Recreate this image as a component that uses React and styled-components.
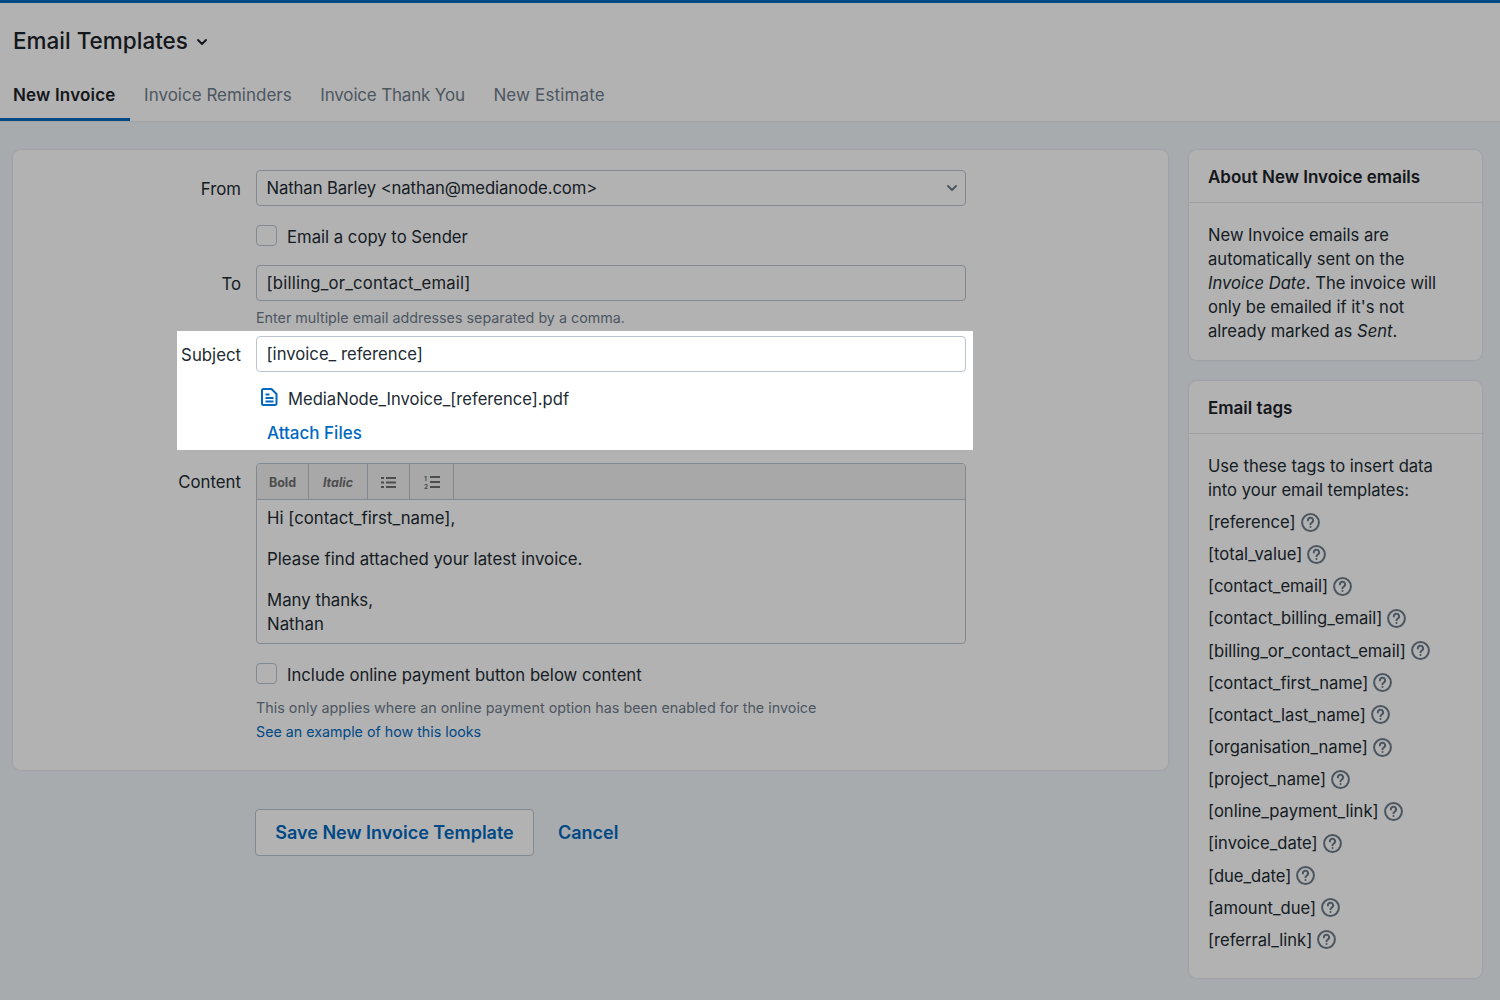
import React from 'react';
import styled, { createGlobalStyle } from 'styled-components';

const GlobalReset = createGlobalStyle`
  html, body {
    margin: 0;
    height: 100%;
    overflow: hidden;
    background: #f1f5fa;
  }
  body {
    font-family: Inter, "Liberation Sans", sans-serif;
    color: #222b33;
  }
  * { box-sizing: border-box; }
`;

const TAGS = [
  'reference', 'total_value', 'contact_email', 'contact_billing_email',
  'billing_or_contact_email', 'contact_first_name', 'contact_last_name',
  'organisation_name', 'project_name', 'online_payment_link', 'invoice_date',
  'due_date', 'amount_due', 'referral_link',
];

const Chevron = ({ size = 12, width = 2 }) => (
  <svg width={size} height={size} viewBox="0 0 12 12" fill="none" stroke="currentColor" strokeWidth={width} strokeLinecap="round" strokeLinejoin="round">
    <path d="M2 4l4 4 4-4" />
  </svg>
);

const HelpIcon = () => (
  <svg width="19" height="19" viewBox="0 0 19 19" fill="none" stroke="#6c7b8a" strokeWidth="2" strokeLinecap="round">
    <circle cx="9.5" cy="9.5" r="8.4" />
    <path d="M6.9 7.4a2.6 2.6 0 1 1 3.9 2.2c-.9.5-1.3 1-1.3 1.7" />
    <path d="M9.5 14v.1" />
  </svg>
);

const FileIcon = () => (
  <svg width="17" height="18" viewBox="0 0 17 18" fill="none" stroke="#0069bf" strokeWidth="2" strokeLinejoin="round">
    <path d="M2.5 1h8l5 5v9.5a1.5 1.5 0 0 1-1.5 1.5H2.5A1.5 1.5 0 0 1 1 15.5v-13A1.5 1.5 0 0 1 2.5 1z" />
    <path d="M4.5 6.5h4M4.5 10h8M4.5 13.5h8" />
  </svg>
);

const BulletIcon = () => (
  <svg width="15" height="13" viewBox="0 0 15 13" fill="#6f6f6f">
    <rect x="0" y="1" width="3" height="2" />
    <rect x="0" y="5.5" width="3" height="2" />
    <rect x="0" y="10" width="3" height="2" />
    <rect x="5" y="1" width="10" height="2" />
    <rect x="5" y="5.5" width="10" height="2" />
    <rect x="5" y="10" width="10" height="2" />
  </svg>
);

const NumberIcon = () => (
  <svg width="16" height="14" viewBox="0 0 16 14" fill="#6f6f6f">
    <text x="0" y="6" fontSize="6.5" fontWeight="700" fontFamily="Inter, sans-serif">1</text>
    <text x="0" y="13.5" fontSize="6.5" fontWeight="700" fontFamily="Inter, sans-serif">2</text>
    <rect x="6" y="1" width="10" height="2" />
    <rect x="6" y="6" width="10" height="2" />
    <rect x="6" y="11" width="10" height="2" />
  </svg>
);

const App = () => (
  <>
    <GlobalReset />
    <Page>
      <Header>
        <Title>
          Email Templates
          <TitleCaret><Chevron /></TitleCaret>
        </Title>
        <Tabs>
          <Tab $active $spacing={0.18}>New Invoice</Tab>
          <Tab>Invoice Reminders</Tab>
          <Tab $spacing={-0.18}>Invoice Thank You</Tab>
          <Tab $spacing={0.15}>New Estimate</Tab>
        </Tabs>
      </Header>

      <Columns>
        <MainColumn>
          <FormCard>
            <FormRow>
              <Label>From</Label>
              <Select>
                Nathan Barley &lt;nathan@medianode.com&gt;
                <SelectCaret><Chevron /></SelectCaret>
              </Select>
            </FormRow>
            <CheckRow>
              <Checkbox />
              <CheckLabel>Email a copy to Sender</CheckLabel>
            </CheckRow>
            <FormRow $top={17}>
              <Label>To</Label>
              <Field $spacing={0.2}>[billing_or_contact_email]</Field>
            </FormRow>
            <Hint>Enter multiple email addresses separated by a comma.</Hint>

            <SubjectGroup>
              <Spotlight />
              <FormRow>
                <Label>Subject</Label>
                <Field>[invoice_ reference]</Field>
              </FormRow>
              <AttachmentRow>
                <FileIcon />
                <span>MediaNode_Invoice_[reference].pdf</span>
              </AttachmentRow>
              <AttachLink>Attach Files</AttachLink>
            </SubjectGroup>

            <ContentRow>
              <Label>Content</Label>
              <Editor>
                <Toolbar>
                  <ToolButton $w={52}>Bold</ToolButton>
                  <ToolButton $w={59} $italic>Italic</ToolButton>
                  <ToolButton $w={42}><BulletIcon /></ToolButton>
                  <ToolButton $w={44}><NumberIcon /></ToolButton>
                </Toolbar>
                <EditorBody>
                  <p>Hi [contact_first_name],</p>
                  <p>Please find attached your latest invoice.</p>
                  <p>Many thanks,<br />Nathan</p>
                </EditorBody>
              </Editor>
            </ContentRow>

            <CheckRow $top={18.5}>
              <Checkbox />
              <CheckLabel>Include online payment button below content</CheckLabel>
            </CheckRow>
            <SmallNote>This only applies where an online payment option has been enabled for the invoice</SmallNote>
            <SmallLink>See an example of how this looks</SmallLink>
          </FormCard>

          <Actions>
            <SaveButton>Save New Invoice Template</SaveButton>
            <CancelLink>Cancel</CancelLink>
          </Actions>
        </MainColumn>

        <Sidebar>
          <SideCard>
            <SideTitle>About New Invoice emails</SideTitle>
            <SideBody>
              New Invoice emails are automatically sent on the <em>Invoice Date</em>. The invoice will only be emailed if it's not already marked as <em>Sent</em>.
            </SideBody>
          </SideCard>
          <SideCard>
            <SideTitle>Email tags</SideTitle>
            <SideBody $bottom={22}>
              Use these tags to insert data into your email templates:
              <TagList>
                {TAGS.map((tag) => (
                  <TagRow key={tag}>[{tag}] <HelpIcon /></TagRow>
                ))}
              </TagList>
            </SideBody>
          </SideCard>
        </Sidebar>
      </Columns>
    </Page>
  </>
);

export default App;

const Page = styled.div`
  height: 1000px;
  border-top: 3px solid #0069bf;
`;

const Header = styled.header`
  height: 119px;
  background: #fff;
  border-bottom: 1px solid #e6e9ee;
`;

const Title = styled.h1`
  display: flex;
  align-items: center;
  height: 75px;
  margin: 0;
  padding-left: 13px;
  font-size: 22.5px;
  font-weight: 500;
  color: #1c2329;
`;

const TitleCaret = styled.span`
  display: flex;
  margin-left: 8px;
  margin-top: 2px;
`;

const Tabs = styled.nav`
  display: flex;
  height: 43px;
`;

const Tab = styled.div`
  display: flex;
  align-items: center;
  padding: 0 14.3px 6px;
  font-size: 17px;
  letter-spacing: ${({ $spacing }) => $spacing || 0}px;
  font-weight: ${({ $active }) => ($active ? 600 : 400)};
  color: ${({ $active }) => ($active ? '#1c2329' : '#6f7d8c')};
  border-bottom: 3px solid ${({ $active }) => ($active ? '#0069bf' : 'transparent')};
  &:first-child {
    padding-left: 13px;
  }
`;

const Columns = styled.div`
  display: flex;
  gap: 21px;
  padding: 28px 18px 0 13px;
`;

const MainColumn = styled.main`
  width: 1155px;
`;

const FormCard = styled.section`
  height: 620px;
  padding-top: 20px;
  background: #fff;
  border-radius: 8px;
  box-shadow: 0 0 3px rgba(60, 70, 90, 0.18);
`;

const FormRow = styled.div`
  display: grid;
  grid-template-columns: 228px 710px;
  column-gap: 15px;
  align-items: center;
  margin-top: ${({ $top }) => $top || 0}px;
`;

const Label = styled.label`
  padding-top: 2px;
  text-align: right;
  font-size: 16.8px;
  color: #222b33;
`;

const Field = styled.div`
  display: flex;
  align-items: center;
  height: 36px;
  padding: 0 9.5px;
  font-size: 16.7px;
  letter-spacing: ${({ $spacing }) => $spacing || 0}px;
  background: #fff;
  border: 1px solid #bcc5cf;
  border-radius: 4px;
`;

const Select = styled(Field)`
  justify-content: space-between;
  letter-spacing: -0.1px;
`;

const SelectCaret = styled.span`
  display: flex;
  margin-right: -2px;
  color: #6f7d8c;
`;

const CheckRow = styled.div`
  display: flex;
  align-items: flex-start;
  gap: 10px;
  margin: ${({ $top }) => $top || 19}px 0 0 243px;
`;

const Checkbox = styled.span`
  width: 21px;
  height: 21px;
  background: #fff;
  border: 1px solid #bcc5cf;
  border-radius: 4px;
`;

const CheckLabel = styled.span`
  margin-top: 2px;
  font-size: 16.7px;
  line-height: 21px;
`;

const Hint = styled.div`
  margin: 8px 0 0 243px;
  font-size: 14.3px;
  line-height: 18px;
  color: #6f7d8c;
`;

const SubjectGroup = styled.div`
  position: relative;
  height: 119px;
  padding-top: 5px;
  margin-top: 4px;
`;

// the white window cut out of the dimmed page, sits over everything else
const Spotlight = styled.div`
  position: absolute;
  top: 0;
  left: 164px;
  width: 796px;
  height: 119px;
  z-index: 10;
  pointer-events: none;
  box-shadow: 0 0 0 2000px rgba(0, 0, 0, 0.3);
`;

const AttachmentRow = styled.div`
  display: flex;
  align-items: flex-start;
  gap: 10px;
  margin: 16px 0 0 248px;
  font-size: 16.6px;
  line-height: 20px;
  & > span {
    margin-top: 1px;
  }
`;

const AttachLink = styled.div`
  margin: 14px 0 0 254px;
  font-size: 17px;
  font-weight: 500;
  color: #0069bf;
`;

const ContentRow = styled(FormRow)`
  align-items: start;
  margin-top: 13px;
  & > label {
    padding-top: 9px;
  }
`;

const Editor = styled.div`
  height: 181px;
  border: 1px solid #bcc5cf;
  border-radius: 4px;
  overflow: hidden;
`;

const Toolbar = styled.div`
  display: flex;
  height: 36px;
  background: #f1f1f1;
  border-bottom: 1px solid #bcc5cf;
`;

const ToolButton = styled.div`
  display: flex;
  align-items: center;
  justify-content: center;
  width: ${({ $w }) => $w}px;
  padding-top: 1px;
  font-size: 12.5px;
  font-weight: 700;
  font-style: ${({ $italic }) => ($italic ? 'italic' : 'normal')};
  color: #6f6f6f;
  border-right: 1px solid #bcc5cf;
`;

const EditorBody = styled.div`
  padding: 7px 10px;
  font-size: 16.8px;
  line-height: 23.6px;
  & p {
    margin: 0 0 17.4px;
  }
`;

const SmallNote = styled.div`
  margin: 12.5px 0 0 243px;
  font-size: 14.35px;
  line-height: 20px;
  color: #6f7d8c;
`;

const SmallLink = styled.div`
  margin: 4px 0 0 243px;
  font-size: 14.25px;
  line-height: 20px;
  color: #0069bf;
`;

const Actions = styled.div`
  display: flex;
  align-items: center;
  gap: 24px;
  margin: 39px 0 0 242px;
`;

const SaveButton = styled.button`
  width: 279px;
  height: 47px;
  padding: 0;
  background: #fff;
  border: 1px solid #bcc5cf;
  border-radius: 4px;
  font: 600 18px Inter, "Liberation Sans", sans-serif;
  color: #0069bf;
`;

const CancelLink = styled.span`
  font-size: 18px;
  font-weight: 600;
  color: #0069bf;
`;

const Sidebar = styled.aside`
  display: flex;
  flex-direction: column;
  gap: 21px;
  width: 293px;
`;

const SideCard = styled.section`
  background: #fff;
  border-radius: 8px;
  box-shadow: 0 0 3px rgba(60, 70, 90, 0.18);
`;

const SideTitle = styled.h2`
  display: flex;
  align-items: center;
  height: 53px;
  margin: 0;
  padding: 2px 19px 0;
  font-size: 17px;
  font-weight: 600;
  color: #1c2329;
  border-bottom: 1px solid #e3e6ea;
`;

const SideBody = styled.div`
  padding: 20px 19px ${({ $bottom }) => $bottom || 17}px;
  font-size: 16.6px;
  line-height: 24px;
`;

const TagList = styled.div`
  margin-top: 4px;
`;

const TagRow = styled.div`
  display: flex;
  align-items: center;
  gap: 5px;
  height: 32.15px;
`;
